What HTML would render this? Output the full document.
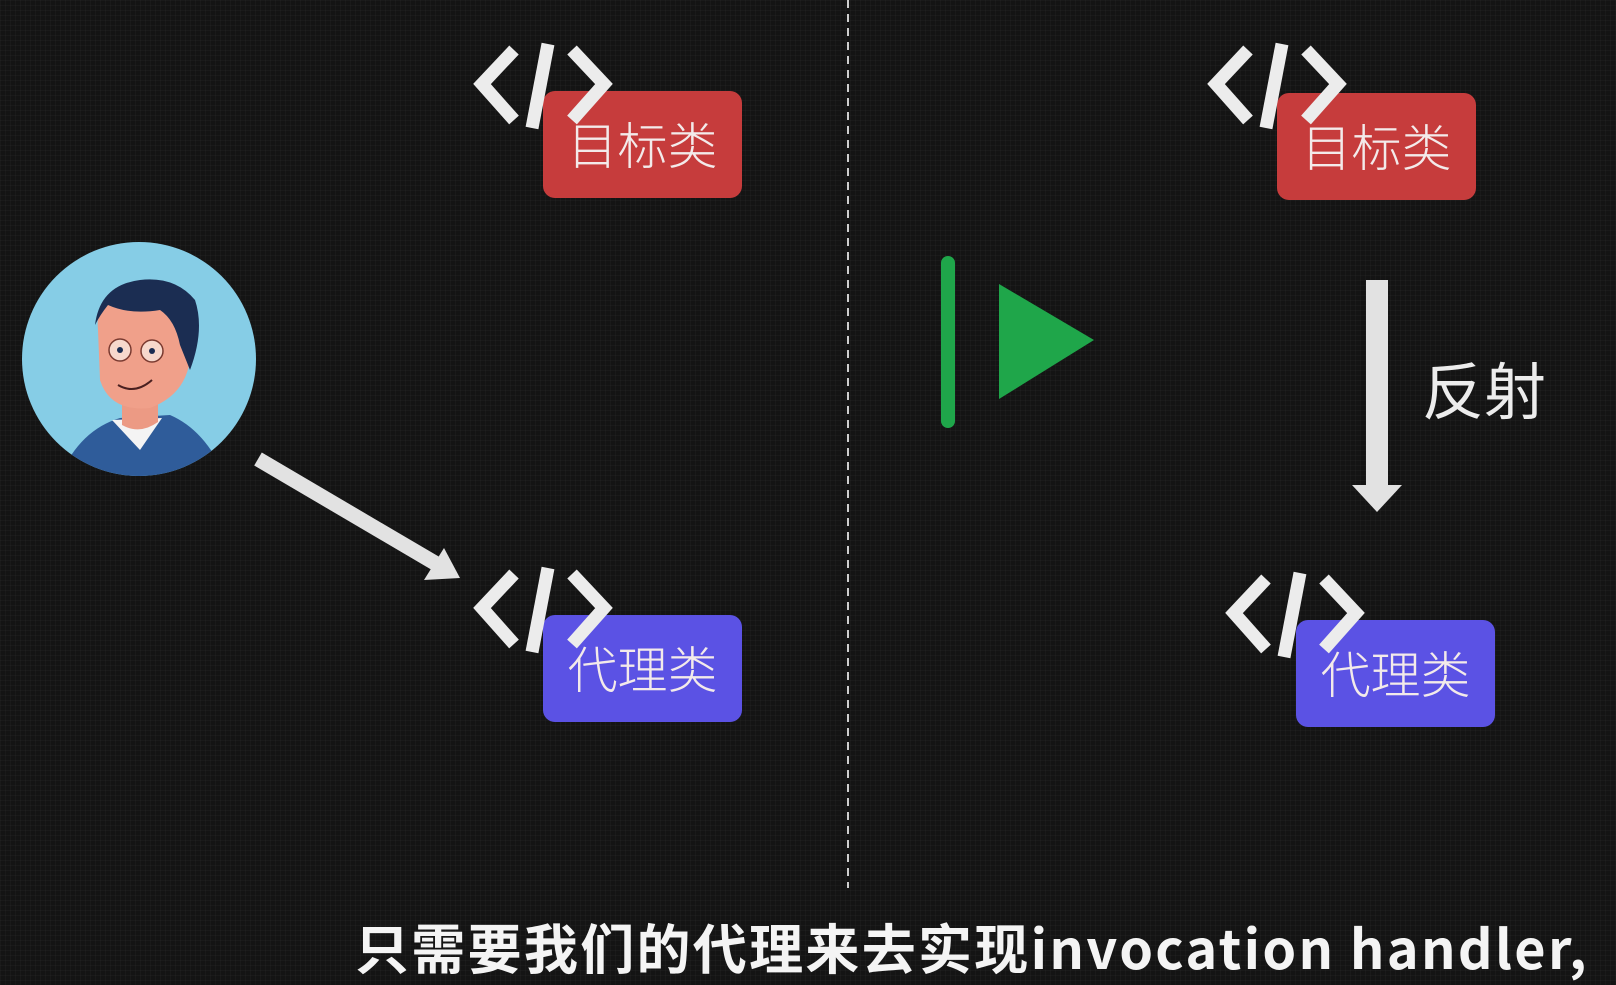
<!DOCTYPE html>
<html><head><meta charset="utf-8"><style>
html,body{margin:0;padding:0}
body{width:1616px;height:975px;overflow:hidden;position:relative;background:#141414;
background-image:linear-gradient(rgba(255,255,255,0.025) 1px,transparent 1px),linear-gradient(90deg,rgba(255,255,255,0.025) 1px,transparent 1px);background-size:5px 5px;
font-family:"Liberation Sans","Noto Sans CJK SC",sans-serif}
.box{position:absolute;width:199px;height:107px;border-radius:12px;color:#f3eaea;font-size:50px;line-height:112px;text-align:center;font-weight:300}
.red{background:#c63c3c}.pur{background:#5b52e4}
.sub{position:absolute;left:355px;top:915px;font-size:54px;line-height:62px;font-weight:bold;color:#f4f4f4;white-space:nowrap;letter-spacing:2.3px;font-family:"Noto Sans CJK SC",sans-serif}
</style></head><body>
<svg width="1616" height="975" style="position:absolute;left:0;top:0">
<line x1="848" y1="0" x2="848" y2="888" stroke="#cfcfcf" stroke-width="2" stroke-dasharray="8,6"/>
</svg>
<div class="box red" style="left:543px;top:91px">目标类</div>
<div class="box pur" style="left:543px;top:615px">代理类</div>
<div class="box red" style="left:1277px;top:93px">目标类</div>
<div class="box pur" style="left:1296px;top:620px">代理类</div>
<svg width="1616" height="975" style="position:absolute;left:0;top:0">
<defs><g id="code" fill="none" stroke="#ececec" stroke-width="13" stroke-linecap="butt">
<polyline points="38,6 6,40 38,76"/>
<line x1="72" y1="0" x2="56" y2="84"/>
<polyline points="96,6 128,40 96,76"/>
</g></defs>
<use href="#code" x="476" y="44"/>
<use href="#code" x="476" y="568"/>
<use href="#code" x="1210" y="44"/>
<use href="#code" x="1228" y="573"/>
<circle cx="139" cy="359" r="117" fill="#86cde6"/>
<clipPath id="cc"><circle cx="139" cy="359" r="117"/></clipPath>
<g clip-path="url(#cc)">
<path d="M60 476 Q80 430 120 418 L170 415 Q205 430 225 476 Z" fill="#2f5c9a"/>
<path d="M112 420 L140 450 L162 418 Z" fill="#f4f4f4"/>
<path d="M122 395 L122 425 Q140 435 158 422 L158 395 Z" fill="#ec9a84"/>
<path d="M98 330 Q95 300 118 292 Q160 285 180 305 L190 360 Q185 395 150 408 Q110 412 100 380 Z" fill="#f0a08a"/>
<path d="M95 325 Q100 285 140 280 Q175 276 195 300 Q205 330 190 370 L180 345 Q175 320 160 310 Q130 315 108 305 Q100 315 95 325 Z" fill="#1b2d52"/>
<circle cx="120" cy="350" r="11" fill="#f7d8cc" stroke="#7a3a30" stroke-width="1.5"/>
<circle cx="152" cy="351" r="11" fill="#f7d8cc" stroke="#7a3a30" stroke-width="1.5"/>
<circle cx="120" cy="350" r="3" fill="#1b2d52"/><circle cx="152" cy="351" r="3" fill="#1b2d52"/>
<path d="M118 385 Q135 395 152 380" fill="none" stroke="#4a2020" stroke-width="2"/>
</g>
<line x1="258" y1="459" x2="440" y2="566" stroke="#e2e2e2" stroke-width="15"/>
<polygon points="460,578 424,580 444,548" fill="#e2e2e2"/>
<rect x="941" y="256" width="14" height="172" rx="7" fill="#1fa64a"/>
<polygon points="999,284 1094,340 999,399" fill="#1fa64a"/>
<rect x="1366" y="280" width="22" height="210" fill="#e2e2e2"/>
<polygon points="1352,485 1402,485 1377,512" fill="#e2e2e2"/>
<text x="1422" y="414" font-size="62" fill="#ececec" font-family="Liberation Sans, Noto Sans CJK SC, sans-serif">反射</text>
</svg>
<div class="sub">只需要我们的代理来去实现invocation handler,</div>
</body></html>
